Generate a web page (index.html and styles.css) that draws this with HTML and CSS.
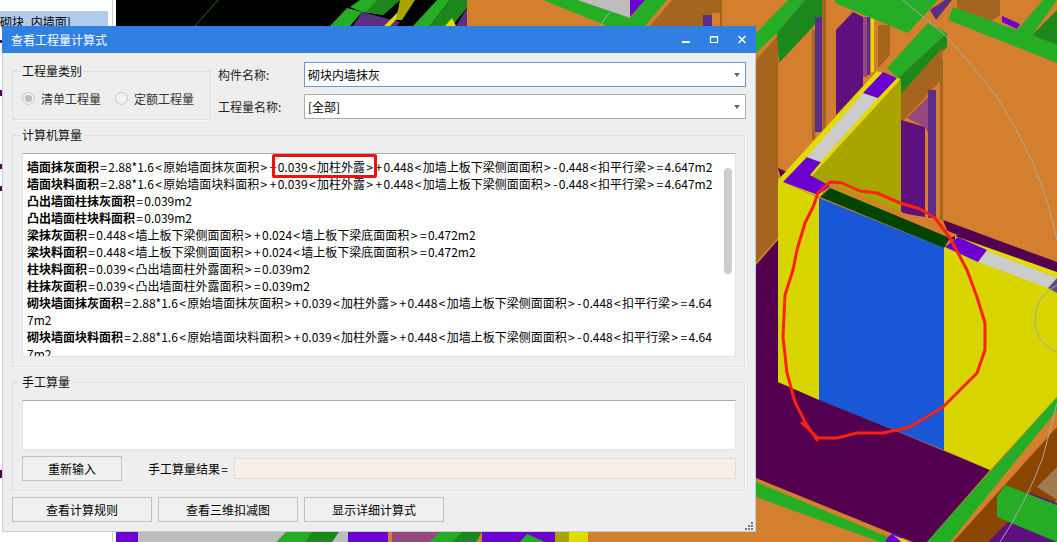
FILE: index.html
```html
<!DOCTYPE html>
<html>
<head>
    <title>查看工程量计算式</title>
    <link rel="stylesheet" href="styles.css">
</head>
<body>
    <div class="side-panel">
        <div class="side-row">砌块_内墙面]</div>
    </div>

    <svg class="scene" width="1057" height="542" viewBox="0 0 1057 542">
        <rect class="orange" x="116" width="941" height="542"/>
        <!-- bits of the tree text left of the dialog -->
        <g class="plum">
            <rect x="0" y="40" width="2" height="3"/><rect x="0" y="90" width="2" height="6"/>
            <rect x="0" y="164" width="2" height="5"/><rect x="0" y="186" width="2" height="5"/>
            <rect x="0" y="470" width="2" height="8"/>
        </g>
        <!-- top strip -->
        <rect class="black" x="116" width="351" height="26"/>
        <path class="thin-green" d="M195 26L218 0"/>
        <polygon class="green" points="330,26 347,8 362,12 350,26"/>
        <polygon class="green" points="350,7 360,0 400,0 383,15 362,12"/>
        <polygon class="green-dark" points="377,0 400,0 383,15 366,12"/>
        <polygon class="violet" points="362,12 400,22 397,26 353,26"/>
        <polygon class="yellow" points="384,26 400,10 405,10 390,26"/>
        <polygon class="olive" points="400,0 415,0 402,20 396,20"/>
        <polygon class="green" points="413,26 437,0 450,0 430,26"/>
        <polygon class="green-dark" points="430,26 450,0 467,0 467,8 452,26"/>
        <polygon class="yellow" points="445,26 452,18 456,26"/>
        <polygon class="violet" points="456,26 467,8 467,26"/>
        <polygon class="gray" points="577,0 630,0 630,18"/>
        <polygon class="green" points="543,0 577,0 630,18 645,0 667,0 645,26 607,26"/>
        <polygon class="purple" points="630,0 645,0 630,17"/>
        <polygon class="brown" points="650,26 672,0 722,0 722,26"/>
        <rect class="orange" x="712" y="13" width="8" height="13"/>
        <rect class="violet" x="703" y="15" width="9" height="11"/>

        <!-- upper right beams and walls -->
        <polygon class="brown" points="756,60 778,35 778,238 756,262"/>
        <polygon class="green" points="756,33 788,0 805,0 777,33 756,53"/>
        <polygon class="green-dark" points="777,33 805,0 822,0 822,17 779,63"/>
        <rect class="brown" x="812" y="30" width="3" height="110"/>
        <rect class="violet" x="815" y="17" width="7" height="115"/>
        <rect class="brown" x="822" y="0" width="4" height="130"/>
        <polygon class="plum-purple" points="836,30 853,12 863,17 863,86 836,115"/>
        <rect class="pink" x="863" y="17" width="4" height="60"/>
        <rect class="violet" x="867" y="17" width="3" height="58"/>
        <rect class="yellow" x="871" y="17" width="3" height="55"/>
        <polygon class="brown" points="878,25 890,25 890,55 878,68"/>
        <polygon class="green" points="835,3 835,0 938,0 908,33"/>
        <polygon class="violet" points="930,10 945,0 952,0 936,20"/>
        <polygon class="brown" points="957,0 1000,0 1000,15 990,22 957,10"/>
        <polygon class="green" points="953,7 1017,30 1043,0 1057,0 1032,35 1057,45 1057,63 948,20"/>
        <polygon class="green-dark" points="1032,35 1057,10 1057,45"/>
        <polygon class="purple" points="1002,16 1020,24 1017,29 1002,22"/>
        <polygon class="green" points="887,68 928,23 947,33 898,78"/>
        <polygon class="green-dark" points="898,78 947,33 947,47 901,94"/>
        <polygon class="brown" points="901,123 941,80 943,47 901,94"/>
        <polygon class="pink" points="907,118 928,97 928,133 925,127"/>
        <polygon class="plum-purple" points="901,120 925,127 925,217 901,213"/>
        <rect class="violet" x="928" y="90" width="8" height="128"/>
        <rect class="brown" x="940" y="60" width="3" height="160"/>
        <polygon class="plum" points="943,220 1057,262 1057,280 950,238"/>
        <polygon class="plum" points="778,168 787,172 781,178"/>

        <!-- wall with the marked column -->
        <polygon class="olive" points="810,178 901,80 901,213 887,212 827,186"/>
        <polygon class="yellow" points="778,180 877,71 901,79 810,178 827,185 820,197"/>
        <polygon class="purple" points="783,182 807,157 821,162 810,175 830,186 818,195"/>
        <polygon class="light-gray" points="807,157 863,93 878,98 820,162"/>
        <polygon class="purple" points="863,93 883,72 897,78 878,98"/>
        <polygon class="orange" points="826,184 830,183 958,235 950,238"/>
        <polygon class="plum" points="756,265 778,240 778,382 990,470 927,542 913,542 756,478"/>
        <polygon class="wall-yellow" points="778,180 819,198 819,400 778,382"/>
        <polygon class="blue" points="819,198 944,248 944,450 819,400"/>
        <polygon class="dark-green" points="820,197 830,188 950,238 944,248"/>
        <polygon class="wall-yellow" points="944,248 955,240 1057,288 1057,397 990,470 944,450"/>
        <polygon class="yellow" points="955,236 1057,272 1057,290 955,240"/>
        <polygon class="purple" points="945,247 958,237 987,250 978,262"/>
        <polygon class="light-gray" points="978,262 987,251 1057,278 1057,290 1048,288"/>
        <polygon class="violet-gray" points="1048,288 1057,278 1057,293"/>

        <!-- lower right beams -->
        <polygon class="green" points="756,482 888,537 900,542 880,542 756,497"/>
        <polygon class="green" points="927,542 1057,397 1057,410 950,542"/>
        <polygon class="dark-brown" points="953,542 1057,427 1057,500 1005,542"/>
        <polygon class="tan" points="1037,487 1057,467 1057,500"/>
        <polygon class="plum-purple" points="988,542 1008,522 1057,540 1057,542"/>
        <polygon class="plum-purple" points="1030,493 1057,503 1057,515 1020,500"/>
        <polygon class="green" points="1005,485 1057,505 1057,542 997,517 997,497"/>
        <polygon class="purple" points="888,537 893,533 903,537 899,542 885,542"/>
        <polygon class="yellow" points="893,535 910,542 902,542"/>

        <!-- bottom strip -->
        <rect class="purple" x="116" y="532" width="22" height="10"/>
        <rect class="gray" x="138" y="532" width="210" height="10"/>
        <polygon class="green" points="276,542 286,532 315,532 305,542"/>
        <polygon class="green-dark" points="305,542 312,532 339,532 332,542"/>
        <rect class="purple" x="348" y="532" width="40" height="10"/>
        <rect class="pink" x="392" y="532" width="50" height="10"/>
        <polygon class="green" points="440,532 480,532 475,542 430,542"/>
        <polygon class="green-dark" points="462,532 482,532 476,542 452,542"/>
        <rect class="purple" x="482" y="532" width="73" height="10"/>
        <polygon class="green" points="520,542 527,534 545,542"/>
        <rect class="olive" x="555" y="532" width="14" height="10"/>
        <rect class="yellow" x="569" y="532" width="19" height="10"/>

        <!-- thin gray curves -->
        <path class="curve" d="M903 0L947 37Q975 68 997 97Q1018 130 1033 163Q1050 205 1057 240"/>
        <path class="curve" d="M1057 403Q1050 430 1043 457Q1025 505 1000 542"/>
        <path class="curve" d="M1057 285Q1035 295 1035 322Q1037 345 1057 352"/>
        <path class="curve" d="M600 26L610 12"/>

        <!-- red hand drawn ring -->
        <path class="ring" d="M817 440L805 422L795 402L787 373L783 337L785 295L793 270L797 250L805 223L813 207L818 193L830 182L842 183L860 191L877 193L900 203L920 209L935 218L950 238L958 253L967 270L977 297L985 323L985 350L977 373L957 393L943 407L910 427L883 433L857 433L837 438L818 438L802 423"/>
    </svg>

    <div class="dialog">
        <div class="titlebar">
            <span class="title">查看工程量计算式</span>
            <div class="win-buttons">
                <svg width="10" height="10" viewBox="0 0 10 10"><rect x="1" y="6" width="8" height="2" fill="#fff"/></svg>
                <svg width="10" height="10" viewBox="0 0 10 10"><path d="M1.5 1.5H8.5V7.5H1.5Z M1 2H9" fill="none" stroke="#fff" stroke-width="1.2"/></svg>
                <svg width="10" height="10" viewBox="0 0 10 10"><path d="M1.5 1L8.5 8M8.5 1L1.5 8" fill="none" stroke="#fff" stroke-width="1.4"/></svg>
            </div>
        </div>
        <div class="dialog-body">
            <div class="top-row">
                <fieldset class="group type-group">
                    <legend>工程量类别</legend>
                    <div class="radio-row">
                        <span class="radio checked"></span><span class="radio-label">清单工程量</span>
                        <span class="radio second"></span><span class="radio-label">定额工程量</span>
                    </div>
                </fieldset>
                <div class="fields">
                    <div class="field">
                        <label>构件名称:</label>
                        <div class="combo active"><span>砌块内墙抹灰</span><i class="arrow"></i></div>
                    </div>
                    <div class="field">
                        <label>工程量名称:</label>
                        <div class="combo"><span>[全部]</span><i class="arrow"></i></div>
                    </div>
                </div>
            </div>

            <fieldset class="group calc-group">
                <legend>计算机算量</legend>
                <div class="calc-box">
                    <div class="calc-text">
                        <div><b>墙面抹灰面积</b><span class="op">=</span>2.88*1.6<span class="op">&lt;</span>原始墙面抹灰面积<span class="op">&gt;</span><span class="op">+</span>0.039<span class="op">&lt;</span>加柱外露<span class="op">&gt;</span><span class="op">+</span>0.448<span class="op">&lt;</span>加墙上板下梁侧面面积<span class="op">&gt;</span><span class="op">-</span>0.448<span class="op">&lt;</span>扣平行梁<span class="op">&gt;</span><span class="op">=</span>4.647m2</div>
                        <div><b>墙面块料面积</b><span class="op">=</span>2.88*1.6<span class="op">&lt;</span>原始墙面块料面积<span class="op">&gt;</span><span class="op">+</span>0.039<span class="op">&lt;</span>加柱外露<span class="op">&gt;</span><span class="op">+</span>0.448<span class="op">&lt;</span>加墙上板下梁侧面面积<span class="op">&gt;</span><span class="op">-</span>0.448<span class="op">&lt;</span>扣平行梁<span class="op">&gt;</span><span class="op">=</span>4.647m2</div>
                        <div><b>凸出墙面柱抹灰面积</b><span class="op">=</span>0.039m2</div>
                        <div><b>凸出墙面柱块料面积</b><span class="op">=</span>0.039m2</div>
                        <div><b>梁抹灰面积</b><span class="op">=</span>0.448<span class="op">&lt;</span>墙上板下梁侧面面积<span class="op">&gt;</span><span class="op">+</span>0.024<span class="op">&lt;</span>墙上板下梁底面面积<span class="op">&gt;</span><span class="op">=</span>0.472m2</div>
                        <div><b>梁块料面积</b><span class="op">=</span>0.448<span class="op">&lt;</span>墙上板下梁侧面面积<span class="op">&gt;</span><span class="op">+</span>0.024<span class="op">&lt;</span>墙上板下梁底面面积<span class="op">&gt;</span><span class="op">=</span>0.472m2</div>
                        <div><b>柱块料面积</b><span class="op">=</span>0.039<span class="op">&lt;</span>凸出墙面柱外露面积<span class="op">&gt;</span><span class="op">=</span>0.039m2</div>
                        <div><b>柱抹灰面积</b><span class="op">=</span>0.039<span class="op">&lt;</span>凸出墙面柱外露面积<span class="op">&gt;</span><span class="op">=</span>0.039m2</div>
                        <div><b>砌块墙面抹灰面积</b><span class="op">=</span>2.88*1.6<span class="op">&lt;</span>原始墙面抹灰面积<span class="op">&gt;</span><span class="op">+</span>0.039<span class="op">&lt;</span>加柱外露<span class="op">&gt;</span><span class="op">+</span>0.448<span class="op">&lt;</span>加墙上板下梁侧面面积<span class="op">&gt;</span><span class="op">-</span>0.448<span class="op">&lt;</span>扣平行梁<span class="op">&gt;</span><span class="op">=</span>4.64<br>7m2</div>
                        <div><b>砌块墙面块料面积</b><span class="op">=</span>2.88*1.6<span class="op">&lt;</span>原始墙面块料面积<span class="op">&gt;</span><span class="op">+</span>0.039<span class="op">&lt;</span>加柱外露<span class="op">&gt;</span><span class="op">+</span>0.448<span class="op">&lt;</span>加墙上板下梁侧面面积<span class="op">&gt;</span><span class="op">-</span>0.448<span class="op">&lt;</span>扣平行梁<span class="op">&gt;</span><span class="op">=</span>4.64<br>7m2</div>
                    </div>
                    <div class="scrollbar"><div class="thumb"></div></div>
                </div>
            </fieldset>

            <fieldset class="group manual-group">
                <legend>手工算量</legend>
                <div class="manual-input"></div>
                <div class="manual-row">
                    <button class="btn reset-btn">重新输入</button>
                    <span class="result-label">手工算量结果<span class="op">=</span></span>
                    <div class="result-box"></div>
                </div>
            </fieldset>

            <div class="footer">
                <button class="btn footer-btn">查看计算规则</button>
                <button class="btn footer-btn">查看三维扣减图</button>
                <button class="btn footer-btn">显示详细计算式</button>
            </div>
        </div>
        <svg class="grip" width="10" height="10" viewBox="0 0 10 10">
            <g fill="#777">
                <rect x="7" y="1" width="2" height="2"/>
                <rect x="4" y="4" width="2" height="2"/><rect x="7" y="4" width="2" height="2"/>
                <rect x="1" y="7" width="2" height="2"/><rect x="4" y="7" width="2" height="2"/><rect x="7" y="7" width="2" height="2"/>
            </g>
        </svg>
    </div>

    <div class="red-mark"></div>
</body>
</html>
```

FILE: styles.css
```css
html, body {
    margin: 0;
    padding: 0;
}
body {
    position: relative;
    width: 1057px;
    height: 542px;
    overflow: hidden;
    background: #fff;
    font-family: "Noto Sans CJK SC", "Noto Sans", sans-serif;
    font-size: 12px;
    color: #000;
}

/* window behind the dialog */
.side-panel {
    position: absolute;
    left: 0;
    top: 0;
    width: 108px;
    height: 542px;
    background: #fff;
    border-right: 1px solid #fff;
    box-shadow: 3px 0 0 #fff, 3px 0 0 1px #ccc;
}
.side-row {
    margin-top: 11px;
    height: 15px;
    line-height: 21px;
    background: #b0cbec;
    white-space: nowrap;
}

.scene {
    position: absolute;
    left: 0;
    top: 0;
}
.orange { fill: #d37f2d; }
.black { fill: #000; }
.green { fill: #25ae25; }
.green-dark { fill: #1c871c; }
.dark-green { fill: #004400; }
.brown { fill: #a5651f; }
.dark-brown { fill: #8a4500; }
.tan { fill: #a07a50; }
.violet { fill: #5a2d86; }
.violet-gray { fill: #5f4a80; }
.purple { fill: #6c00d0; }
.plum-purple { fill: #5e107e; }
.plum { fill: #52004f; }
.pink { fill: #96497c; }
.gray { fill: #bdbdbd; }
.light-gray { fill: #cccccc; }
.yellow { fill: #e0dc00; }
.wall-yellow { fill: #d7d400; }
.olive { fill: #a9a500; }
.blue { fill: #1a57d6; }
.thin-green { fill: none; stroke: #0a7a0a; }
.curve { fill: none; stroke: #a8a8a8; stroke-width: 1; }
.ring { fill: none; stroke: #ff2010; stroke-width: 3; stroke-linejoin: round; stroke-linecap: round; }

/* dialog */
.dialog {
    position: absolute;
    left: 2px;
    top: 26px;
    width: 754px;
    height: 506px;
    box-sizing: border-box;
    display: flex;
    flex-direction: column;
    background: #eeeeee;
    border: 1px solid #c5cdd9;
    border-top: none;
}
.titlebar {
    height: 27px;
    margin: 0 -1px;
    flex: none;
    display: flex;
    align-items: center;
    justify-content: space-between;
    padding: 0 9px 0 9px;
    background: #2f80e2;
    color: #fff;
}
.win-buttons {
    display: flex;
    gap: 18px;
}
.dialog-body {
    flex: 1;
    padding: 9px 9px 0 9px;
}

.group {
    margin: 0;
    padding: 0;
    min-width: 0;
    box-sizing: border-box;
    border: 1px solid #dfdfdf;
    box-shadow: 1px 1px 0 #f8f8f8;
}
.group legend {
    margin-left: 7px;
    padding: 0 2px;
    line-height: 16px;
    color: #111;
}
.calc-group legend,
.manual-group legend {
    margin-left: -2px;
}

.top-row {
    display: flex;
    height: 57px;
}
.type-group {
    width: 199px;
    height: 57px;
    margin-top: 1px;
}
.radio-row {
    display: flex;
    align-items: center;
    padding: 11px 0 0 9px;
}
.radio {
    width: 11px;
    height: 11px;
    flex: none;
    border: 1px solid #c8c8c8;
    border-radius: 50%;
    background: #f2f2f2;
    margin-right: 6px;
}
.radio.checked {
    background: radial-gradient(circle, #bdbdbd 0 3.5px, #f2f2f2 4px);
}
.radio.second {
    margin-left: 14px;
}
.radio-label {
    color: #333;
    white-space: nowrap;
}

.fields {
    flex: 1;
    margin-left: 7px;
    display: flex;
    flex-direction: column;
    gap: 7px;
}
.field {
    display: flex;
    align-items: center;
    height: 25px;
}
.field label {
    width: 86px;
    flex: none;
    color: #222;
}
.combo {
    width: 442px;
    height: 25px;
    box-sizing: border-box;
    display: flex;
    align-items: center;
    justify-content: space-between;
    padding: 0 5px 0 3px;
    background: #fff;
    border: 1px solid #adadad;
}
.combo.active {
    border-color: #6e94d8;
}
.arrow {
    width: 0;
    height: 0;
    border-left: 3.5px solid transparent;
    border-right: 3.5px solid transparent;
    border-top: 4px solid #666;
}

.calc-group {
    width: 733px;
    height: 240px;
    margin-top: 8px;
    padding: 10px 8px 0 9px;
}
.calc-box {
    height: 204px;
    box-sizing: border-box;
    display: flex;
    overflow: hidden;
    background: #fff;
    border: 1px solid #dfe3ea;
    border-top-color: #b0b0b0;
    padding: 4px 0 0 4px;
}
.calc-text {
    flex: none;
    width: 690px;
    line-height: 17px;
}
.calc-text div {
    white-space: nowrap;
}
.calc-text b {
    font-weight: 700;
}
/* the operators sit wider in the original font */
.op {
    padding: 0 1.3px;
}
.scrollbar {
    flex: 1;
    padding: 10px 0 0 7px;
}
.thumb {
    width: 8px;
    height: 106px;
    border-radius: 4px;
    background: #cccccc;
}

.manual-group {
    width: 733px;
    height: 117px;
    margin-top: 7px;
    padding: 10px 8px 0 9px;
}
.manual-input {
    height: 50px;
    box-sizing: border-box;
    background: #fff;
    border: 1px solid #dfe3ea;
    border-top-color: #adadad;
}
.manual-row {
    display: flex;
    align-items: center;
    height: 25px;
    margin-top: 6px;
}
.btn {
    padding: 0;
    height: 25px;
    box-sizing: border-box;
    background: #f0f0f0;
    border: 1px solid #c2c2c2;
    border-radius: 0;
    font-family: inherit;
    font-size: 12px;
    color: #000;
}
.reset-btn {
    width: 100px;
}
.result-label {
    margin-left: 26px;
    width: 86px;
    flex: none;
    white-space: nowrap;
}
.result-box {
    flex: 1;
    height: 21px;
    box-sizing: border-box;
    background: #f9efe6;
    border: 1px solid #dfdfdf;
}

.footer {
    display: flex;
    gap: 6px;
    margin-top: 6px;
}
.footer-btn {
    width: 140px;
}

.grip {
    position: absolute;
    right: 1px;
    bottom: 0;
}

/* hand drawn box around the +0.039 term */
.red-mark {
    position: absolute;
    left: 272px;
    top: 154px;
    width: 105px;
    height: 24px;
    box-sizing: border-box;
    border: 3px solid #f01010;
    border-radius: 2px;
}
```
